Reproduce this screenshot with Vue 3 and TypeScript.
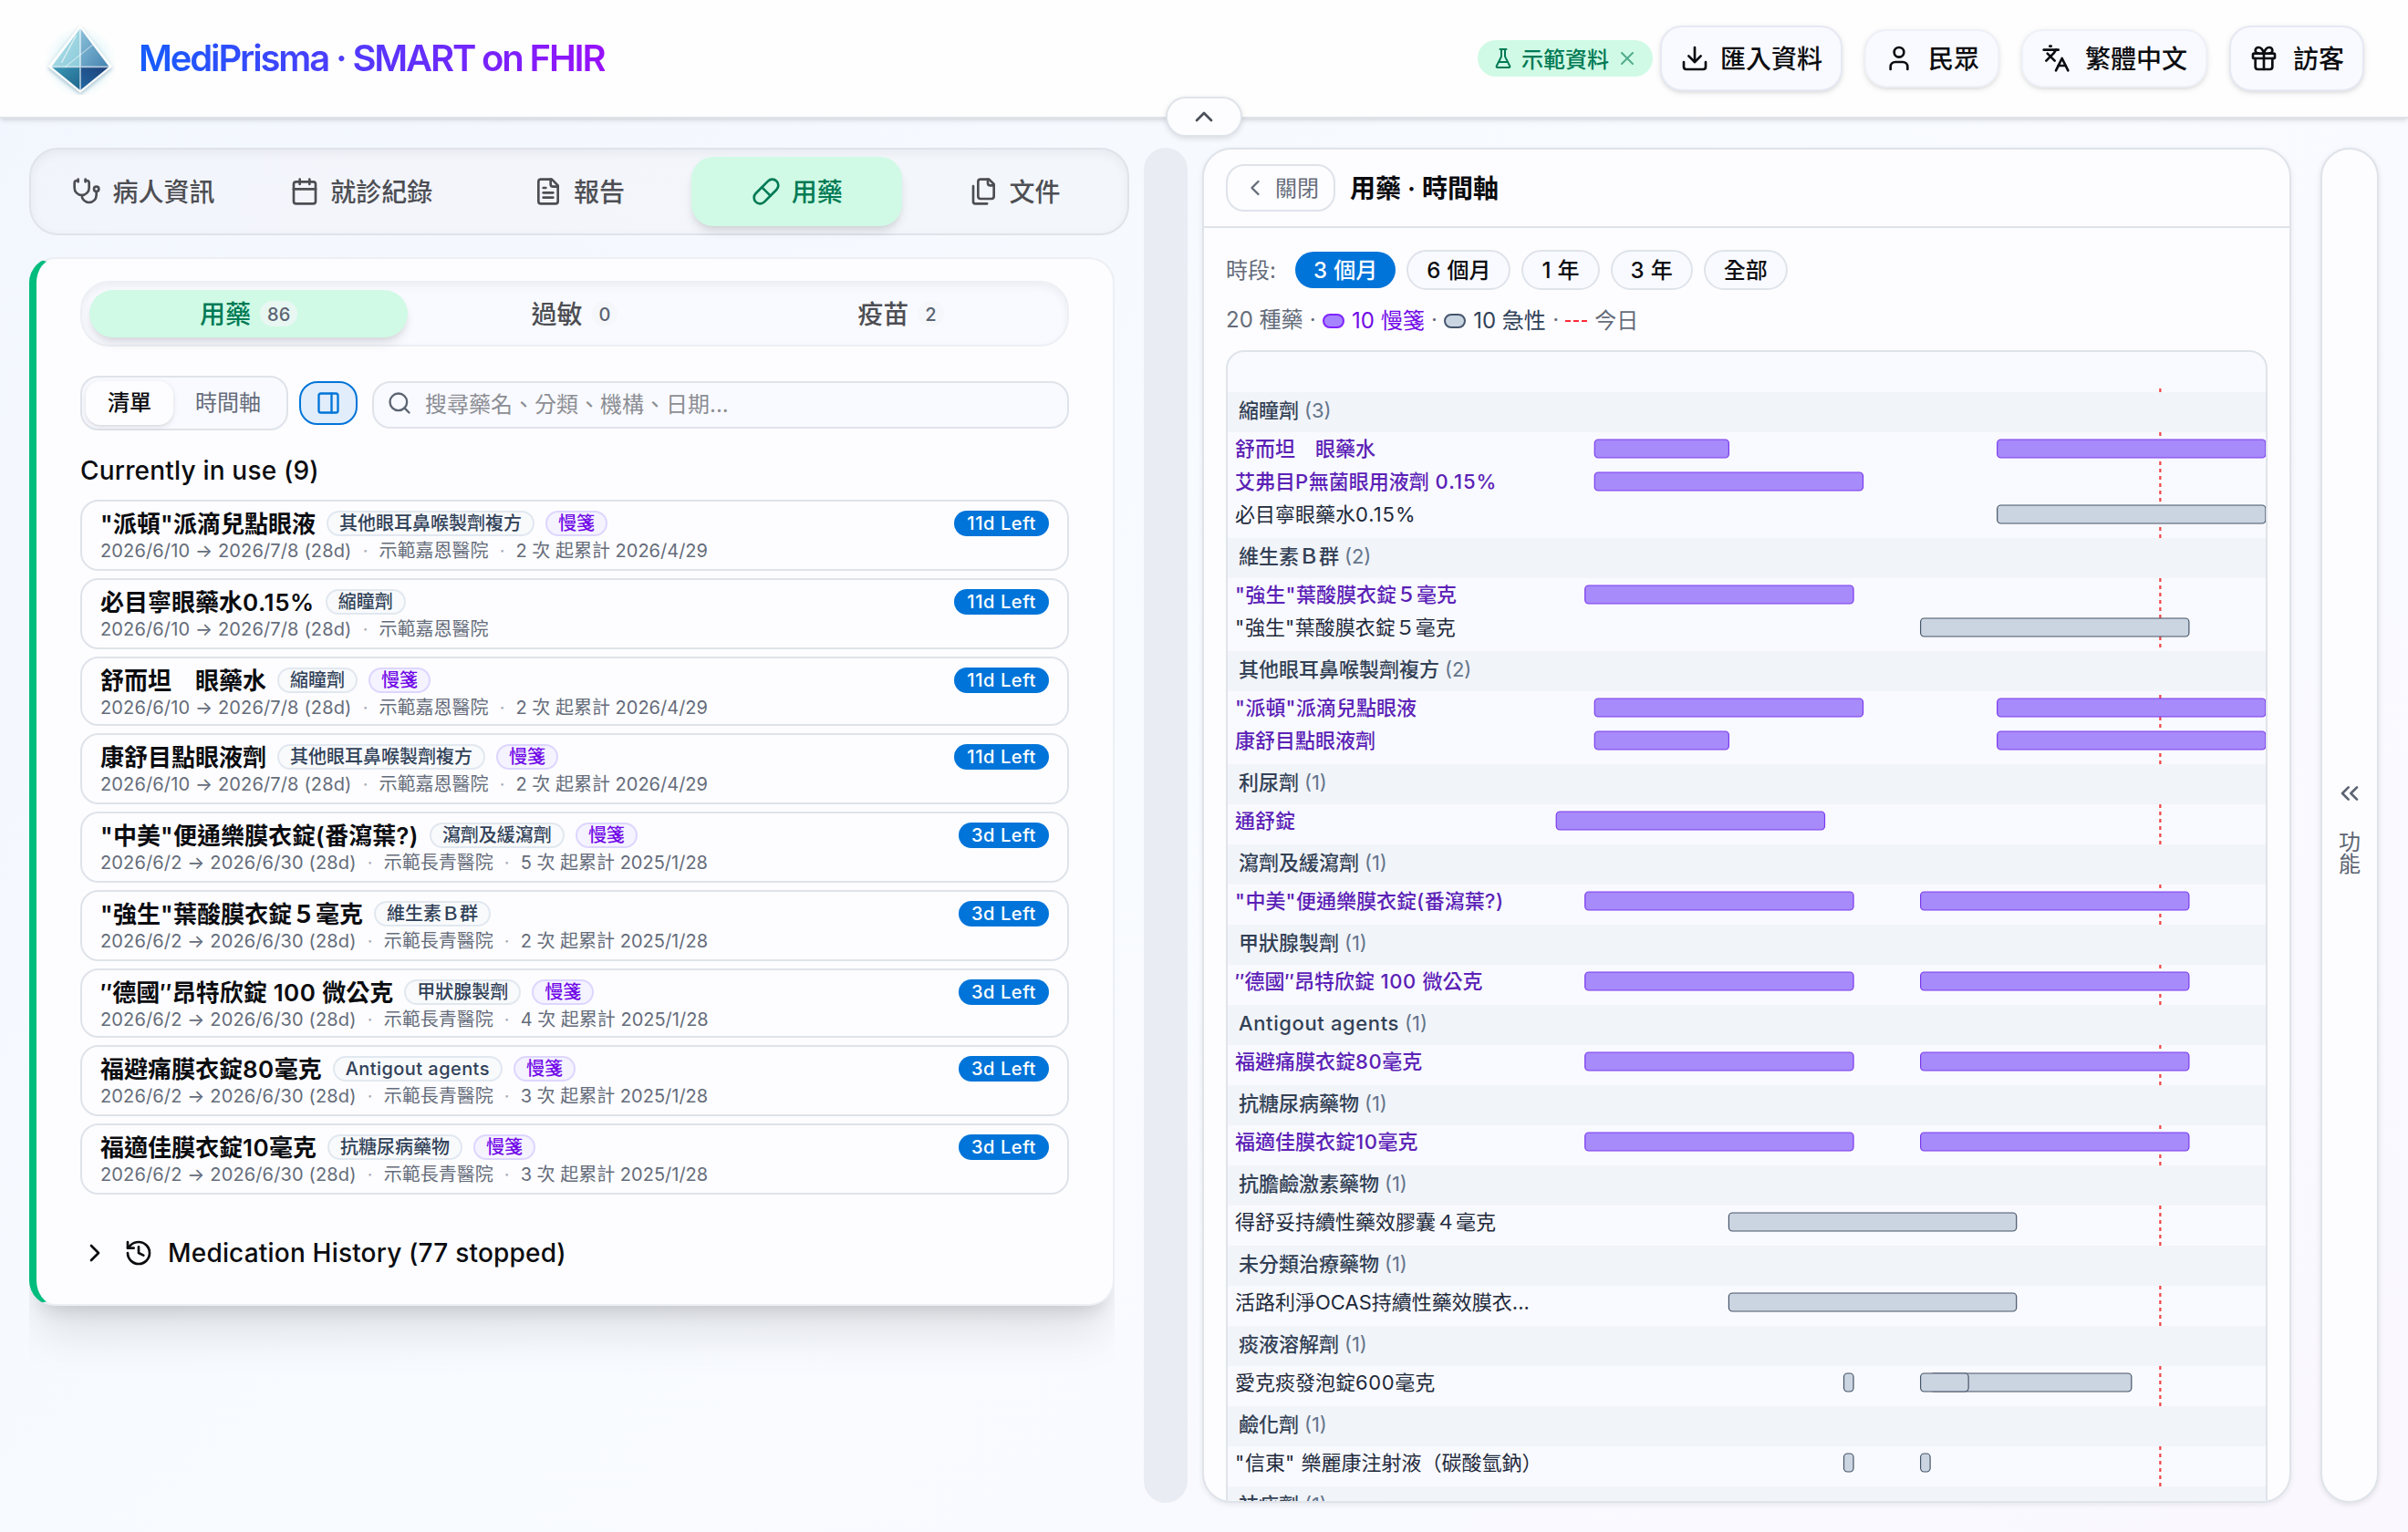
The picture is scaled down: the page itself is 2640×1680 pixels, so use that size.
<script setup lang="ts">
import { h, type FunctionalComponent } from 'vue'

interface Medication {
  name: string
  category: string
  chronic: boolean
  period: string
  hospital: string
  total?: string
  left: string
}
interface Bar {
  start: number
  days: number
}
interface TimelineRow {
  name: string
  chronic: boolean
  bars: Bar[]
}
interface TimelineGroup {
  label: string
  count: number
  rows: TimelineRow[]
}

const icons: Record<string, string> = {
  stethoscope:
    '<path d="M11 2v2"/><path d="M5 2v2"/><path d="M5 3H4a2 2 0 0 0-2 2v4a6 6 0 0 0 12 0V5a2 2 0 0 0-2-2h-1"/><path d="M8 15a6 6 0 0 0 12 0v-3"/><circle cx="20" cy="10" r="2"/>',
  calendar:
    '<path d="M8 2v4"/><path d="M16 2v4"/><rect width="18" height="18" x="3" y="4" rx="2"/><path d="M3 10h18"/>',
  report:
    '<path d="M15 2H6a2 2 0 0 0-2 2v16a2 2 0 0 0 2 2h12a2 2 0 0 0 2-2V7Z"/><path d="M14 2v4a2 2 0 0 0 2 2h4"/><path d="M10 9H8"/><path d="M16 13H8"/><path d="M16 17H8"/>',
  pill: '<path d="m10.5 20.5 10-10a4.95 4.95 0 1 0-7-7l-10 10a4.95 4.95 0 1 0 7 7Z"/><path d="m8.5 8.5 7 7"/>',
  files:
    '<path d="M20 7h-3a2 2 0 0 1-2-2V2"/><path d="M9 18a2 2 0 0 1-2-2V4a2 2 0 0 1 2-2h7l4 4v10a2 2 0 0 1-2 2Z"/><path d="M3 7.6v12.8A1.6 1.6 0 0 0 4.6 22h9.8"/>',
  flask:
    '<path d="M10 2v7.53a2 2 0 0 1-.21.9L4.72 20.55a1 1 0 0 0 .9 1.45h12.76a1 1 0 0 0 .9-1.45l-5.07-10.13A2 2 0 0 1 14 9.53V2"/><path d="M8.5 2h7"/><path d="M7 16h10"/>',
  close: '<path d="M18 6 6 18"/><path d="m6 6 12 12"/>',
  download:
    '<path d="M12 15V3"/><path d="M21 15v4a2 2 0 0 1-2 2H5a2 2 0 0 1-2-2v-4"/><path d="m7 10 5 5 5-5"/>',
  user: '<path d="M19 21v-2a4 4 0 0 0-4-4H9a4 4 0 0 0-4 4v2"/><circle cx="12" cy="7" r="4"/>',
  languages:
    '<path d="m5 8 6 6"/><path d="m4 14 6-6 2-3"/><path d="M2 5h12"/><path d="M7 2h1"/><path d="m22 22-5-10-5 10"/><path d="M14 18h6"/>',
  gift: '<rect x="3" y="8" width="18" height="4" rx="1"/><path d="M12 8v13"/><path d="M19 12v7a2 2 0 0 1-2 2H7a2 2 0 0 1-2-2v-7"/><path d="M7.5 8a2.5 2.5 0 0 1 0-5A4.8 8 0 0 1 12 8a4.8 8 0 0 1 4.5-5 2.5 2.5 0 0 1 0 5"/>',
  chevronUp: '<path d="m18 15-6-6-6 6"/>',
  chevronRight: '<path d="m9 18 6-6-6-6"/>',
  chevronLeft: '<path d="m15 18-6-6 6-6"/>',
  chevronsLeft: '<path d="m11 17-5-5 5-5"/><path d="m18 17-5-5 5-5"/>',
  panel: '<rect width="18" height="18" x="3" y="3" rx="2"/><path d="M15 3v18"/>',
  search: '<circle cx="11" cy="11" r="8"/><path d="m21 21-4.34-4.34"/>',
  history:
    '<path d="M3 12a9 9 0 1 0 9-9 9.75 9.75 0 0 0-6.74 2.74L3 8"/><path d="M3 3v5h5"/><path d="M12 7v5l4 2"/>',
}

// Mixed-script label: Latin runs are tracked slightly wider than the CJK glyphs around them.
const MixedText: FunctionalComponent<{ text: string }> = (props) =>
  h(
    'span',
    (props.text.match(/[\x20-\x7e″]+|[^\x20-\x7e″]+/g) ?? []).map((run) => {
      if (!/[\x20-\x7e]/.test(run) || /[A-Z]{2}|\.\.\./.test(run)) return run
      return h('span', { class: run.includes('%') ? 'latin wide' : 'latin' }, run)
    }),
  )
MixedText.props = ['text']

const tabs = [
  { label: '病人資訊', icon: 'stethoscope' },
  { label: '就診紀錄', icon: 'calendar' },
  { label: '報告', icon: 'report' },
  { label: '用藥', icon: 'pill', active: true },
  { label: '文件', icon: 'files' },
]

const subTabs = [
  { label: '用藥', count: 86, active: true },
  { label: '過敏', count: 0 },
  { label: '疫苗', count: 2 },
]

const JUNE_10 = '2026/6/10 → 2026/7/8 (28d)'
const JUNE_2 = '2026/6/2 → 2026/6/30 (28d)'

const medications: Medication[] = [
  { name: '"派頓"派滴兒點眼液', category: '其他眼耳鼻喉製劑複方', chronic: true, period: JUNE_10, hospital: '示範嘉恩醫院', total: '2 次 起累計 2026/4/29', left: '11d Left' },
  { name: '必目寧眼藥水0.15%', category: '縮瞳劑', chronic: false, period: JUNE_10, hospital: '示範嘉恩醫院', left: '11d Left' },
  { name: '舒而坦　眼藥水', category: '縮瞳劑', chronic: true, period: JUNE_10, hospital: '示範嘉恩醫院', total: '2 次 起累計 2026/4/29', left: '11d Left' },
  { name: '康舒目點眼液劑', category: '其他眼耳鼻喉製劑複方', chronic: true, period: JUNE_10, hospital: '示範嘉恩醫院', total: '2 次 起累計 2026/4/29', left: '11d Left' },
  { name: '"中美"便通樂膜衣錠(番瀉葉?)', category: '瀉劑及緩瀉劑', chronic: true, period: JUNE_2, hospital: '示範長青醫院', total: '5 次 起累計 2025/1/28', left: '3d Left' },
  { name: '"強生"葉酸膜衣錠５毫克', category: '維生素Ｂ群', chronic: false, period: JUNE_2, hospital: '示範長青醫院', total: '2 次 起累計 2025/1/28', left: '3d Left' },
  { name: '″德國″昂特欣錠 100 微公克', category: '甲狀腺製劑', chronic: true, period: JUNE_2, hospital: '示範長青醫院', total: '4 次 起累計 2025/1/28', left: '3d Left' },
  { name: '福避痛膜衣錠80毫克', category: 'Antigout agents', chronic: true, period: JUNE_2, hospital: '示範長青醫院', total: '3 次 起累計 2025/1/28', left: '3d Left' },
  { name: '福適佳膜衣錠10毫克', category: '抗糖尿病藥物', chronic: true, period: JUNE_2, hospital: '示範長青醫院', total: '3 次 起累計 2025/1/28', left: '3d Left' },
]

const ranges = ['3 個月', '6 個月', '1 年', '3 年', '全部']

// Bar starts are day offsets from 2026/6/2.
const refill: Bar[] = [{ start: -35, days: 28 }, { start: 0, days: 28 }]
const groups: TimelineGroup[] = [
  {
    label: '縮瞳劑', count: 3,
    rows: [
      { name: '舒而坦　眼藥水', chronic: true, bars: [{ start: -34, days: 14 }, { start: 8, days: 28 }] },
      { name: '艾弗目P無菌眼用液劑 0.15%', chronic: true, bars: [{ start: -34, days: 28 }] },
      { name: '必目寧眼藥水0.15%', chronic: false, bars: [{ start: 8, days: 28 }] },
    ],
  },
  {
    label: '維生素Ｂ群', count: 2,
    rows: [
      { name: '"強生"葉酸膜衣錠５毫克', chronic: true, bars: [{ start: -35, days: 28 }] },
      { name: '"強生"葉酸膜衣錠５毫克', chronic: false, bars: [{ start: 0, days: 28 }] },
    ],
  },
  {
    label: '其他眼耳鼻喉製劑複方', count: 2,
    rows: [
      { name: '"派頓"派滴兒點眼液', chronic: true, bars: [{ start: -34, days: 28 }, { start: 8, days: 28 }] },
      { name: '康舒目點眼液劑', chronic: true, bars: [{ start: -34, days: 14 }, { start: 8, days: 28 }] },
    ],
  },
  { label: '利尿劑', count: 1, rows: [{ name: '通舒錠', chronic: true, bars: [{ start: -38, days: 28 }] }] },
  { label: '瀉劑及緩瀉劑', count: 1, rows: [{ name: '"中美"便通樂膜衣錠(番瀉葉?)', chronic: true, bars: refill }] },
  { label: '甲狀腺製劑', count: 1, rows: [{ name: '″德國″昂特欣錠 100 微公克', chronic: true, bars: refill }] },
  { label: 'Antigout agents', count: 1, rows: [{ name: '福避痛膜衣錠80毫克', chronic: true, bars: refill }] },
  { label: '抗糖尿病藥物', count: 1, rows: [{ name: '福適佳膜衣錠10毫克', chronic: true, bars: refill }] },
  { label: '抗膽鹼激素藥物', count: 1, rows: [{ name: '得舒妥持續性藥效膠囊４毫克', chronic: false, bars: [{ start: -20, days: 30 }] }] },
  { label: '未分類治療藥物', count: 1, rows: [{ name: '活路利淨OCAS持續性藥效膜衣...', chronic: false, bars: [{ start: -20, days: 30 }] }] },
  {
    label: '痰液溶解劑', count: 1,
    rows: [{ name: '愛克痰發泡錠600毫克', chronic: false, bars: [{ start: -8, days: 1 }, { start: 1, days: 21 }, { start: 0, days: 5 }] }],
  },
  {
    label: '鹼化劑', count: 1,
    rows: [{ name: '"信東" 樂麗康注射液（碳酸氫鈉）', chronic: false, bars: [{ start: -8, days: 1 }, { start: 0, days: 1 }] }],
  },
  { label: '祛痰劑', count: 1, rows: [] },
]

const DAY = 10.51
const ORIGIN = 759.6
const todayX = ORIGIN + 25 * DAY
const barX = (bar: Bar): number => ORIGIN + bar.start * DAY
const barWidth = (bar: Bar): number => bar.days * DAY
</script>

<template>
  <div class="app" lang="zh-TW">
    <header class="topbar">
      <div class="brand">
        <svg class="logo" viewBox="0 0 80 80">
          <defs>
            <linearGradient id="tl" x1="0" y1="0" x2="1" y2="1">
              <stop offset="0" stop-color="#b4e3ea" /><stop offset="1" stop-color="#8ccada" />
            </linearGradient>
            <linearGradient id="tr" x1="0" y1="0" x2="1" y2="1">
              <stop offset="0" stop-color="#8cc2da" /><stop offset="1" stop-color="#4482b0" />
            </linearGradient>
            <linearGradient id="bl" x1="0" y1="0" x2="1" y2="1">
              <stop offset="0" stop-color="#3c98b6" /><stop offset="1" stop-color="#1f658c" />
            </linearGradient>
            <linearGradient id="br" x1="0" y1="1" x2="1" y2="0">
              <stop offset="0" stop-color="#2468a2" /><stop offset="1" stop-color="#1c3f78" />
            </linearGradient>
            <radialGradient id="glow">
              <stop offset="0.5" stop-color="#cdeff4" stop-opacity="0.8" /><stop offset="1" stop-color="#eaf8fa" stop-opacity="0" />
            </radialGradient>
            <filter id="lift" x="-20%" y="-20%" width="140%" height="150%">
              <feDropShadow dx="0" dy="2" stdDeviation="2" flood-color="#1d4f78" flood-opacity="0.35" />
            </filter>
          </defs>
          <ellipse cx="40" cy="44" rx="40" ry="40" fill="url(#glow)" />
          <path d="M40 4 L75 49 L40 77.5 L4.7 49 Z" fill="#fff" filter="url(#lift)" />
          <path d="M40 7 V49.3 H8.4 Z" fill="url(#tl)" />
          <path d="M40 7 V49.3 H71.6 Z" fill="url(#tr)" />
          <path d="M40 49.3 V75 L8.4 49.3 Z" fill="url(#bl)" />
          <path d="M40 49.3 V75 L71.6 49.3 Z" fill="url(#br)" />
          <g fill="none" stroke="#fff" stroke-linecap="round">
            <path d="M40 6 V75 M8 49.3 H72" stroke-width="1.8" opacity="0.6" />
            <path d="M35.3 15 L19.7 44.3" stroke-width="1.4" opacity="0.6" />
            <path d="M53.7 25 L23.7 49.3" stroke-width="1.2" opacity="0.45" />
          </g>
        </svg>
        <h1 class="title">MediPrisma · SMART on FHIR</h1>
      </div>
      <div class="actions">
        <span class="demo">
          <svg class="icon i24" viewBox="0 0 24 24" v-html="icons.flask" />
          <span class="demo-text">示範資料</span>
          <svg class="icon i24 dismiss" viewBox="0 0 24 24" v-html="icons.close" />
        </span>
        <button class="action tall import">
          <svg class="icon i32" viewBox="0 0 24 24" v-html="icons.download" /><span class="action-text">匯入資料</span>
        </button>
        <button class="action"><svg class="icon i32" viewBox="0 0 24 24" v-html="icons.user" /><span class="action-text">民眾</span></button>
        <button class="action"><svg class="icon i32" viewBox="0 0 24 24" v-html="icons.languages" /><span class="action-text">繁體中文</span></button>
        <button class="action tall"><svg class="icon i32" viewBox="0 0 24 24" v-html="icons.gift" /><span class="action-text">訪客</span></button>
      </div>
      <button class="fold"><svg class="icon i32" viewBox="0 0 24 24" v-html="icons.chevronUp" /></button>
    </header>

    <main class="workspace">
      <section class="left">
        <nav class="tabs">
          <div v-for="tab in tabs" :key="tab.label" class="tab" :class="{ active: tab.active }">
            <svg class="icon i32" viewBox="0 0 24 24" v-html="icons[tab.icon]" /><span class="tab-text">{{ tab.label }}</span>
          </div>
        </nav>
        <div class="card-clip">
          <div class="card">
            <div class="subtabs">
              <div v-for="tab in subTabs" :key="tab.label" class="subtab" :class="{ active: tab.active }">
                <span class="tab-text">{{ tab.label }}</span><span class="count">{{ tab.count }}</span>
              </div>
            </div>
            <div class="tools">
              <div class="toggle"><span class="option on">清單</span><span class="option">時間軸</span></div>
              <button class="split"><svg class="icon i28" viewBox="0 0 24 24" v-html="icons.panel" /></button>
              <div class="search">
                <svg class="icon i28" viewBox="0 0 24 24" v-html="icons.search" />
                <span class="placeholder">搜尋藥名、分類、機構、日期...</span>
              </div>
            </div>
            <h2 class="heading">Currently in use (9)</h2>
            <div class="meds">
              <article v-for="med in medications" :key="med.name" class="med">
                <div class="med-main">
                  <div class="med-top">
                    <MixedText class="med-name" :text="med.name" />
                    <MixedText class="tag" :text="med.category" />
                    <span v-if="med.chronic" class="tag chronic">慢箋</span>
                  </div>
                  <div class="med-meta">
                    <span class="period">{{ med.period }}</span><i class="dot">·</i><span>{{ med.hospital }}</span>
                    <template v-if="med.total"><i class="dot">·</i><span>{{ med.total }}</span></template>
                  </div>
                </div>
                <span class="left-badge">{{ med.left }}</span>
              </article>
            </div>
            <div class="past">
              <svg class="icon i32" viewBox="0 0 24 24" v-html="icons.chevronRight" />
              <svg class="icon i32" viewBox="0 0 24 24" v-html="icons.history" />
              <span class="past-title">Medication History (77 stopped)</span>
            </div>
          </div>
        </div>
      </section>

      <div class="divider"></div>

      <section class="panel">
        <div class="panel-head">
          <button class="back"><svg class="icon i28" viewBox="0 0 24 24" v-html="icons.chevronLeft" /><span class="back-text">關閉</span></button>
          <h2 class="panel-title">用藥 · 時間軸</h2>
        </div>
        <div class="ranges">
          <span class="range-label">時段:</span>
          <button v-for="(range, i) in ranges" :key="range" class="range" :class="{ on: i === 0 }"><MixedText :text="range" /></button>
        </div>
        <div class="legend">
          <span>20 種藥</span><span class="sep">·</span>
          <span class="key violet"><i class="chip"></i>10 慢箋</span><span class="sep">·</span>
          <span class="key slate"><i class="chip"></i>10 急性</span><span class="sep">·</span>
          <span class="key"><i class="dash"></i>今日</span>
        </div>
        <div class="timeline">
          <div class="axis"></div>
          <div class="chart">
            <svg class="today" width="1138" height="1240">
              <line :x1="todayX" :x2="todayX" y1="0" y2="1240" stroke="#ef4444" stroke-width="2.2" stroke-dasharray="4 4" />
            </svg>
            <div v-for="group in groups" :key="group.label" class="group">
              <div class="group-head"><MixedText :text="group.label" /> <span class="group-count">({{ group.count }})</span></div>
              <div v-for="(row, i) in group.rows" :key="i" class="row" :class="{ chronic: row.chronic }">
                <svg class="bars" width="1138" height="36">
                  <rect v-for="(bar, j) in row.bars" :key="j" :x="barX(bar)" y="8" :width="barWidth(bar)" height="20" rx="4" />
                </svg>
                <MixedText class="row-name" :text="row.name" />
              </div>
            </div>
          </div>
        </div>
      </section>

      <aside class="rail">
        <svg class="icon i32" viewBox="0 0 24 24" v-html="icons.chevronsLeft" />
        <span class="rail-text">功能</span>
      </aside>
    </main>
  </div>
</template>

<style>
body {
  margin: 0;
}
.latin {
  letter-spacing: 0.028em;
}
.latin.wide {
  letter-spacing: 0.044em;
}
.tag .latin {
  letter-spacing: 0.022em;
}
.med-name .latin {
  letter-spacing: 0.016em;
}
.med-name .latin.wide {
  letter-spacing: 0.022em;
}
.range .latin {
  letter-spacing: 0.015em;
}
</style>

<style scoped>
* {
  box-sizing: border-box;
}
.app {
  width: 2640px;
  height: 1680px;
  overflow: hidden;
  display: flex;
  flex-direction: column;
  font-family: Inter, 'Noto Sans CJK TC', sans-serif;
  color: #0b0c10;
  background: linear-gradient(135deg, #f2f6fe 0%, #f8fbff 48%, #faf8fe 100%);
}
button {
  font: inherit;
  color: inherit;
  padding: 0;
  margin: 0;
}
h1,
h2 {
  margin: 0;
}
i {
  font-style: normal;
}
span {
  white-space: nowrap;
}
.icon {
  display: block;
  flex: none;
  fill: none;
  stroke: currentColor;
  stroke-width: 2;
  stroke-linecap: round;
  stroke-linejoin: round;
}
.i24 { width: 24px; height: 24px; }
.i28 { width: 28px; height: 28px; }
.i32 { width: 32px; height: 32px; }

/* Top bar */
.topbar {
  position: relative;
  z-index: 2;
  flex: none;
  height: 130px;
  padding: 0 48px;
  display: flex;
  align-items: center;
  justify-content: space-between;
  background: #fefefe;
  border-bottom: 2px solid #dfe3ea;
  box-shadow: 0 2px 6px rgba(0, 0, 0, 0.1), 0 2px 4px -2px rgba(0, 0, 0, 0.1);
}
.brand {
  display: flex;
  align-items: center;
  gap: 24px;
}
.logo {
  width: 80px;
  height: 80px;
  display: block;
}
.title {
  font-size: 40px;
  line-height: 56px;
  font-weight: 600;
  letter-spacing: -2.15px;
  background: linear-gradient(90deg, #155dfc, #9810fa);
  -webkit-background-clip: text;
  background-clip: text;
  color: transparent;
}
.actions {
  display: flex;
  align-items: center;
  font-size: 28px;
  font-weight: 500;
}
.demo {
  height: 40px;
  padding: 0 16px;
  margin-right: 8px;
  display: flex;
  align-items: center;
  gap: 8px;
  border-radius: 20px;
  background: #d0fae5;
  color: #007a55;
  font-size: 24px;
}
.demo-text,
.action-text {
  margin-top: -2px;
}
.dismiss {
  opacity: 0.6;
}
.action {
  height: 64px;
  padding: 0 20px;
  display: flex;
  align-items: center;
  gap: 16px;
  border: 2px solid #eff1f8;
  border-radius: 24px;
  background: #f9faff;
  box-shadow: 0 2px 6px rgba(0, 0, 0, 0.1), 0 2px 4px -2px rgba(0, 0, 0, 0.1);
}
.action + .action {
  margin-left: 24px;
}
.tall {
  height: 72px;
  border-color: #e6e9f3;
}
.import {
  gap: 12px;
}
.fold {
  position: absolute;
  left: 1278px;
  top: 106px;
  width: 84px;
  height: 44px;
  display: flex;
  align-items: center;
  justify-content: center;
  border: 2px solid #dfe3ea;
  border-radius: 22px;
  background: #fdfdff;
  color: #4b4f5a;
  box-shadow: 0 2px 6px rgba(0, 0, 0, 0.12);
}

/* Workspace */
.workspace {
  flex: 1;
  min-height: 0;
  display: flex;
  padding: 32px;
}
.left {
  width: 1206px;
  flex: none;
}
.tabs {
  height: 96px;
  padding: 8px;
  display: grid;
  grid-template-columns: repeat(5, 1fr);
  gap: 8px;
  border: 2px solid #dfe3ea;
  border-radius: 32px;
  background: rgba(241, 243, 249, 0.6);
  box-shadow: inset 0 4px 12px rgba(0, 0, 0, 0.05);
}
.tab {
  display: flex;
  align-items: center;
  justify-content: center;
  gap: 12px;
  border-radius: 24px;
  font-size: 28px;
  font-weight: 500;
  color: #4d4e53;
}
.tab-text {
  margin-top: -2px;
}
.tab.active,
.subtab.active {
  background: #d0fae5;
  color: #007a55;
  box-shadow: 0 8px 12px -2px rgba(0, 0, 0, 0.1), 0 4px 8px -4px rgba(0, 0, 0, 0.1);
}
.card-clip {
  margin-top: 24px;
  width: 1190px;
  height: 1366px;
  overflow: hidden;
}
.card {
  width: 1190px;
  height: 1150px;
  padding: 24px 48px 0;
  border: 2px solid #eceff4;
  border-left: 8px solid #00bc7d;
  border-radius: 28px;
  background: #fdfdff;
  box-shadow: 0 40px 50px -10px rgba(0, 0, 0, 0.1), 0 16px 20px -12px rgba(0, 0, 0, 0.14);
}
.subtabs {
  height: 72px;
  padding: 8px;
  display: grid;
  grid-template-columns: repeat(3, 1fr);
  gap: 8px;
  border: 2px solid #eceff4;
  border-radius: 32px;
  background: #f9faff;
  box-shadow: inset 0 4px 10px rgba(0, 0, 0, 0.05);
}
.subtab {
  display: flex;
  align-items: center;
  justify-content: center;
  gap: 10px;
  border-radius: 26px;
  font-size: 28px;
  font-weight: 500;
  color: #4d4e53;
}
.count {
  height: 28px;
  padding: 0 8px;
  border-radius: 14px;
  background: rgba(244, 245, 249, 0.7);
  font-size: 20px;
  line-height: 30px;
  color: #5c6472;
}
.tools {
  margin-top: 32px;
  height: 60px;
  display: flex;
  align-items: center;
  font-size: 24px;
}
.toggle {
  height: 60px;
  padding: 4px;
  display: flex;
  border: 2px solid #dfe3ea;
  border-radius: 20px;
  background: #f9faff;
}
.option {
  padding: 0 24px;
  line-height: 48px;
  border-radius: 16px;
  color: #656c7a;
}
.option.on {
  color: #0b0c10;
  font-weight: 500;
  background: #fdfdff;
  box-shadow: 0 2px 6px rgba(0, 0, 0, 0.1), 0 2px 4px -2px rgba(0, 0, 0, 0.1);
}
.split {
  width: 64px;
  height: 48px;
  margin: 0 16px 0 12px;
  display: flex;
  align-items: center;
  justify-content: center;
  border: 2px solid #0074d9;
  border-radius: 20px;
  background: #e1edfa;
  color: #0074d9;
}
.search {
  flex: 1;
  height: 52px;
  margin-top: 4px;
  padding-left: 14px;
  display: flex;
  align-items: center;
  gap: 14px;
  border: 2px solid #dfe3ea;
  border-radius: 20px;
  background: #f9faff;
  color: #8c8e94;
}
.search .icon {
  margin-top: -4px;
  color: #5c6472;
}
.placeholder {
  margin-top: -5px;
}
.heading {
  margin-top: 24px;
  height: 40px;
  line-height: 41px;
  font-size: 28px;
  font-weight: 500;
  letter-spacing: 0.19px;
}
.meds {
  margin-top: 12px;
  display: flex;
  flex-direction: column;
  gap: 8px;
}
.med {
  height: 78px;
  padding: 8px 20px 0;
  display: flex;
  justify-content: space-between;
  border: 2px solid #dfe3ea;
  border-radius: 20px;
}
.med:nth-child(4n + 3) {
  height: 76px;
}
.med-top {
  height: 32px;
  display: flex;
  align-items: center;
  gap: 12px;
}
.med-name {
  font-size: 26px;
  line-height: 30px;
  padding-top: 2px;
  font-weight: 600;
}
.tag {
  height: 28px;
  padding: 0 12px;
  border: 2px solid #e2e8f0;
  border-radius: 14px;
  background: #f8fafc;
  color: #314158;
  font-size: 20px;
  line-height: 25px;
  font-weight: 500;
}
.tag.chronic {
  border-color: #ddd6ff;
  background: #f5f3ff;
  color: #7008e7;
}
.med-meta {
  height: 26px;
  display: flex;
  align-items: center;
  gap: 12px;
  font-size: 20px;
  line-height: 26px;
  padding-top: 1px;
  color: #656c7a;
}
.period {
  letter-spacing: 0.14px;
}
.dot {
  width: 6px;
  text-align: center;
  color: #a9adb8;
}
.left-badge {
  height: 28px;
  margin-top: 2px;
  padding: 0 14px;
  border-radius: 14px;
  background: #0074d9;
  color: #fff;
  font-size: 20px;
  line-height: 29px;
  font-weight: 500;
  letter-spacing: 0.58px;
}
.past {
  margin-top: 44px;
  height: 40px;
  display: flex;
  align-items: center;
  gap: 16px;
  font-size: 28px;
  line-height: 40px;
  font-weight: 500;
  letter-spacing: 0.19px;
}

.divider {
  width: 48px;
  flex: none;
  margin: 0 16px;
  height: 1486px;
  border-radius: 24px;
  background: #e9ecf2;
}

/* Timeline panel */
.panel {
  width: 1194px;
  height: 1486px;
  flex: none;
  overflow: hidden;
  border: 2px solid #dfe3ea;
  border-radius: 32px;
  background: #fdfdff;
  box-shadow: 0 2px 6px rgba(0, 0, 0, 0.08);
}
.panel-head {
  height: 86px;
  padding: 0 24px;
  display: flex;
  align-items: center;
  gap: 16px;
  border-bottom: 2px solid #dfe3ea;
}
.back {
  width: 120px;
  height: 52px;
  padding-left: 16px;
  display: flex;
  align-items: center;
  gap: 8px;
  border: 2px solid #dfe3ea;
  border-radius: 20px;
  background: #fdfdff;
  color: #656c7a;
  font-size: 24px;
}
.back-text {
  margin-top: -3px;
}
.panel-title {
  margin-top: -2px;
  font-size: 28px;
  font-weight: 600;
}
.ranges {
  margin: 24px 24px 0;
  height: 44px;
  display: flex;
  align-items: center;
  gap: 12px;
  font-size: 24px;
}
.range-label {
  width: 64px;
  margin-top: -4px;
  color: #656c7a;
}
.range {
  height: 44px;
  padding: 0 20px 3px;
  border: 2px solid #dfe3ea;
  border-radius: 22px;
  background: #f9faff;
  font-weight: 500;
  white-space: nowrap;
}
.range.on {
  height: 40px;
  border: 0;
  background: #0074d9;
  color: #fff;
}
.legend {
  margin: 17px 24px 0;
  height: 32px;
  display: flex;
  align-items: center;
  font-size: 24px;
  line-height: 32px;
  color: #656c7a;
}
.sep {
  width: 21.5px;
  text-align: center;
}
.key {
  padding-top: 2px;
  display: flex;
  align-items: center;
  gap: 8px;
}
.chip {
  width: 24px;
  height: 16px;
  border: 2px solid #7f22fe;
  border-radius: 8px;
  background: #a684ff;
}
.violet {
  color: #7008e7;
}
.slate {
  color: #314158;
}
.slate .chip {
  border-color: #45556c;
  background: #cad5e2;
}
.dash {
  width: 24px;
  border-top: 2px dashed #fb2c36;
}
.timeline {
  margin: 17px 24px 0;
  height: 1400px;
  border: 2px solid #dfe3ea;
  border-radius: 20px;
  background: #f9faff;
  overflow: hidden;
}
.axis {
  height: 40px;
}
.chart {
  position: relative;
  padding-top: 4px;
}
.today {
  position: absolute;
  left: 0;
  top: 0;
}
.group {
  position: relative;
  padding-bottom: 8px;
}
.group-head {
  height: 44px;
  padding-left: 12px;
  background: #f1f4f9;
  color: #334155;
  font-size: 22px;
  line-height: 41px;
  font-weight: 500;
}
.group-count {
  color: #64748b;
  font-weight: 400;
}
.row {
  position: relative;
  height: 36px;
  padding-left: 8px;
  font-size: 22px;
  line-height: 36px;
  color: #1e293b;
}
.row.chronic {
  color: #5b21b6;
  font-weight: 500;
}
.bars {
  position: absolute;
  left: 0;
  top: 0;
}
.bars rect {
  fill: #cbd5e1;
  stroke: #475569;
  stroke-width: 1.2;
}
.chronic .bars rect {
  fill: #a78bfa;
  stroke: #7c3aed;
}

.rail {
  width: 64px;
  height: 1486px;
  margin-left: 32px;
  padding-top: 3px;
  flex: none;
  display: flex;
  flex-direction: column;
  align-items: center;
  justify-content: center;
  gap: 26px;
  border: 2px solid #dfe3ea;
  border-radius: 32px;
  background: #fdfdff;
  color: #5c6472;
  box-shadow: 0 2px 6px rgba(0, 0, 0, 0.1);
}
.rail-text {
  width: 24px;
  font-size: 24px;
  line-height: 24px;
  white-space: normal;
  word-break: break-all;
}
</style>
